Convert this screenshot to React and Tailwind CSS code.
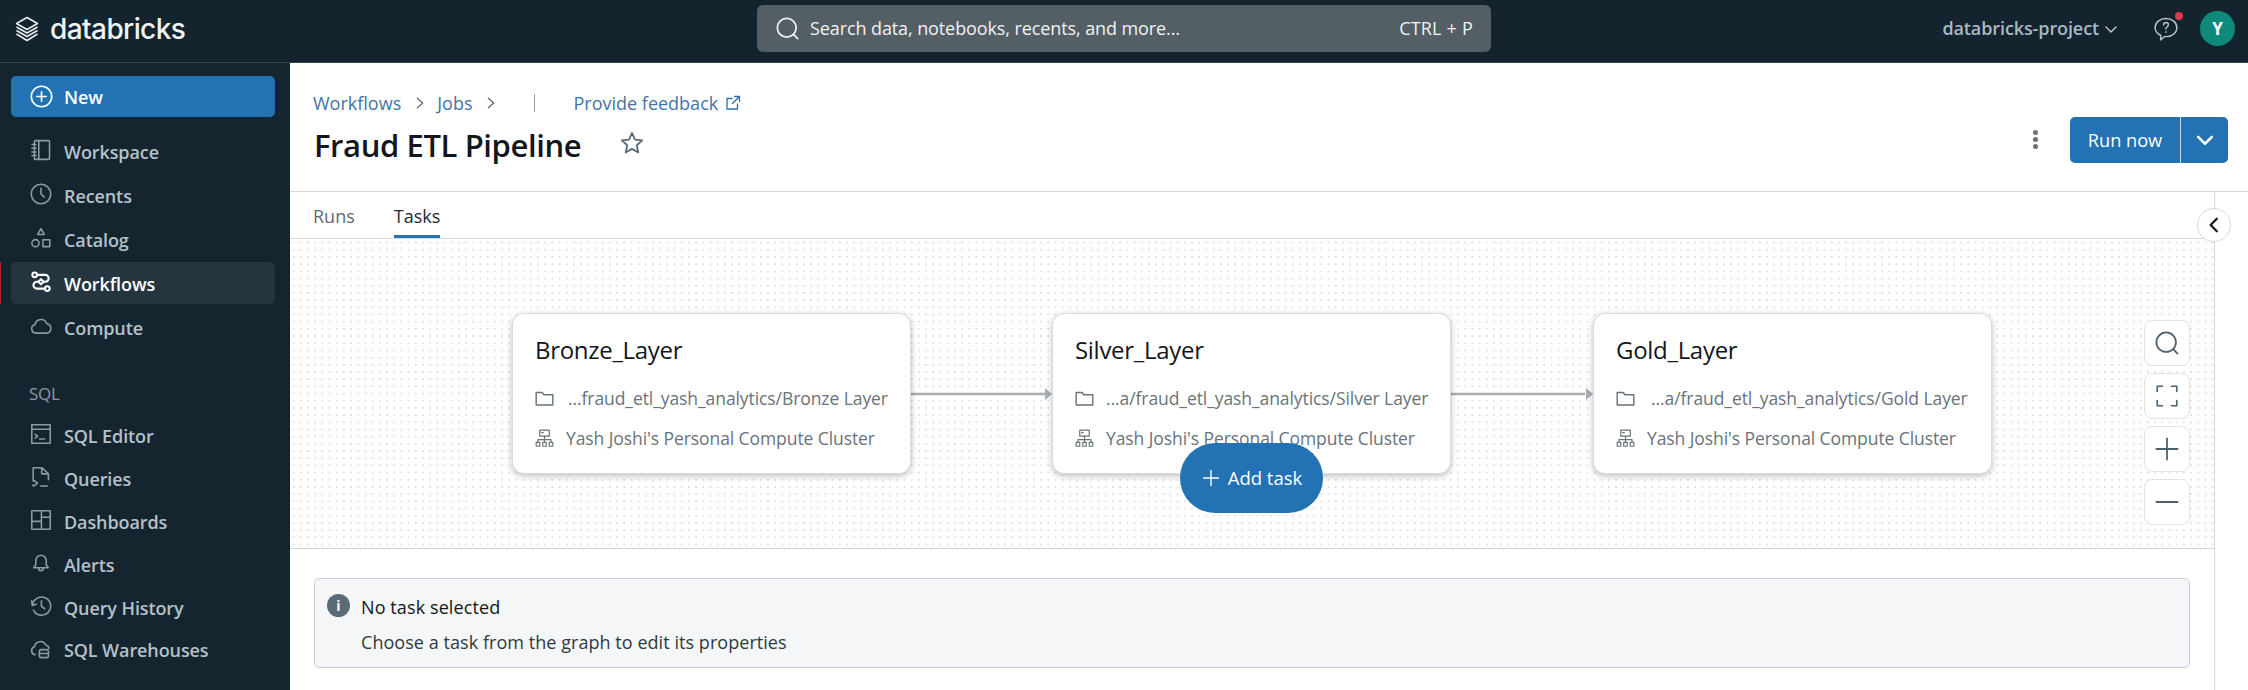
import React from "react";

const S = ({ children, size = 22, className = "", vb = 16, sw = 1 }) => (
  <svg width={size} height={size} viewBox={`0 0 ${vb} ${vb}`} fill="none" stroke="currentColor" strokeWidth={sw} strokeLinecap="round" strokeLinejoin="round" className={className}>{children}</svg>
);

const icons = {
  plus: <><circle cx="8" cy="8" r="7.1" /><path d="M8 4.7v6.6M4.7 8h6.6" /></>,
  workspace: <><rect x="3.2" y="1.2" width="11" height="13.6" rx=".6" /><path d="M6.4 1.2v13.6M1.4 4h3M1.4 6.7h3M1.4 9.4h3M1.4 12h3" /></>,
  clock: <><circle cx="8" cy="8" r="7.1" /><path d="M8 3.8V8l2.4 2.3" /></>,
  catalog: <><path d="M8 1.2l2.4 4.2H5.6z" /><circle cx="4" cy="11.8" r="2.6" /><rect x="9.4" y="9.3" width="5" height="5" /></>,
  workflows: <g strokeWidth="1.5"><circle cx="3.4" cy="2.8" r="1.7" /><path d="M5.1 2.8h6a2.5 2.5 0 0 1 0 5H5a2.5 2.5 0 0 0 0 5h6" /><circle cx="12.6" cy="12.8" r="1.7" /><path d="M8 5.9l1.9 1.9L8 9.7 6.1 7.800z" fill="#24353f" /></g>,
  cloud: <path d="M4.2 13.2a3.200 3.200 0 0 1-.5-6.300 4.400 4.400 0 0 1 8.500-.6 3.500 3.500 0 0 1 .1 6.900z" />,
  sqlEditor: <><rect x="1.300" y="1.300" width="13.400" height="13.400" /><path d="M1.300 4.600h13.400M3.800 8.200l1.700 1.400-1.700 1.400M7 11.600h3.600" /></>,
  queries: <path d="M2.300 11V1.300h6.400l4.700 4.400v4.300M8.500 1.500v4.200h4.800M2.300 14.600v-1M3 10.600l2.500 1.900L3 14.400M7.700 14.600h4.800" />,
  dashboards: <><rect x="1.300" y="1.300" width="13.400" height="13.400" /><path d="M1.300 9h7M8.300 1.300v13.400M8.300 6h6.400" /></>,
  bell: <path d="M2.700 11.500h10.600l-1.500-2.200V6.200a3.800 3.800 0 0 0-7.600 0v3.100zM6.200 11.800a1.800 1.800 0 0 0 3.600 0" />,
  history: <><path d="M1.300 4.200l.3 3.400 3-.9M1.900 7.200A6.600 6.600 0 1 1 2.500 11" /><path d="M8.300 4.200v4l2.400 1.800" /></>,
  warehouse: <><path d="M3.800 12.900a3 3 0 0 1-.6-5.800 4.400 4.400 0 0 1 8.300-1.300 3.500 3.500 0 0 1 2.400 2.300" /><rect x="6.800" y="9.200" width="6.600" height="5.800" rx="1.300" /><path d="M6.800 12h6.600" /></>,
};

const Item = ({ icon, label, active, h = "h-[42px] mb-[2px]" }) => (
  <div className={`relative flex items-center pl-[19px] ml-[11px] mr-[14px] rounded-[5px] ${h} ${active ? "bg-[#24353f] text-white font-semibold" : "text-[#b4c1c9] font-semibold"}`}>
    {active && <div className="absolute -left-[11px] top-0 bottom-0 w-px bg-[#b3262a]" />}
    <S sw={1.15} className={`shrink-0 -mt-[2px] ${active ? "text-white" : "text-[#8b9aa4]"}`}>{icons[icon]}</S>
    <span className="ml-[12px] pt-[3px] text-[18px] tracking-[-0.1px] whitespace-nowrap">{label}</span>
  </div>
);

const Folder = () => (
  <S size={19} sw={1.2} className="shrink-0 text-[#6a737a]"><path d="M1 3h5l1.500 1.800H15V13.500H1z" /></S>
);
const Net = () => (
  <S size={19} className="shrink-0 text-[#6a737a]"><rect x="4" y="1" width="8" height="5" /><path d="M5.500 3h1.500M8 6v3M2.500 11V9h11v2M8 9v2" /><rect x="1" y="11.200" width="3" height="3.300" /><rect x="6.500" y="11.200" width="3" height="3.300" /><rect x="12" y="11.200" width="3" height="3.300" /></S>
);

const Node = ({ pos, title, path, gap }) => (
  <div className={`absolute top-[74px] w-[399px] h-[161px] bg-white rounded-[12px] border border-[#d8dce0] shadow-[0_2px_6px_rgba(60,70,80,0.35)] pl-[22px] pt-[19px] ${pos}`}>
    <div className="text-[24px] leading-[34px] text-[#11171c] tracking-[-0.3px]">{title}</div>
    <div className="flex items-center h-[26px] mt-[18px] text-[#6a737a] text-[17.500px] tracking-[-0.08px] whitespace-nowrap">
      <Folder /><span className={gap}>{path}</span>
    </div>
    <div className="flex items-center h-[26px] mt-[14px] text-[#6a737a] text-[17.500px] tracking-[-0.08px] whitespace-nowrap">
      <Net /><span className="ml-[12px]">Yash Joshi's Personal Compute Cluster</span>
    </div>
  </div>
);

const ZoomBtn = ({ children }) => (
  <div className="w-[46px] h-[46px] bg-white border border-[#dfe3e7] rounded-[8px] flex items-center justify-center text-[#4d6070]">{children}</div>
);

export default function App() {
  return (
    <div className="w-[2248px] h-[690px] overflow-hidden flex flex-col bg-white font-['Open_Sans','Noto_Sans',sans-serif]">
      <header className="h-[63px] shrink-0 bg-[#14242f] border-b border-[#33434d] flex items-center relative pb-[5px]">
        <div className="w-[289px] flex items-center pl-[15px] text-white shrink-0">
          <svg width="24" height="26" viewBox="0 0 24 26" fill="none" stroke="#e8ecef" strokeWidth="1.500" strokeLinejoin="round">
            <path d="M12 1.500L22.500 7.500 12 13.500 1.500 7.500z" />
            <path d="M1.500 11l10.500 6 10.500-6M1.500 14.500l10.500 6 10.500-6M1.500 18l10.500 6.500L22.500 18" />
          </svg>
          <span className="ml-[11px] text-[28px] font-medium tracking-[-0.6px] font-['Inter',sans-serif] text-[#f2f4f5]">databricks</span>
        </div>
        <div className="ml-[468px] w-[734px] h-[47px] rounded-[6px] bg-[#545f65] flex items-center pl-[18px] pr-[18px] text-[#f0f2f3] text-[18px]">
          <S size={25} sw={1.100}><circle cx="7.500" cy="7.500" r="6" /><path d="M11.800 11.800l2.700 2.700" /></S>
          <span className="ml-[10px] tracking-[-0.1px]">Search data, notebooks, recents, and more...</span>
          <span className="ml-auto tracking-[0.2px]">CTRL + P</span>
        </div>
        <div className="ml-auto flex items-center pr-[13px]">
          <span className="text-[#a9b8c2] font-semibold text-[18px] tracking-[-0.1px]">databricks-project</span>
          <S size={16} className="ml-[4px] text-[#c3ced5]" sw={1.300}><path d="M3 6l5 5 5-5" /></S>
          <div className="relative ml-[34px] mr-[21px] text-[#b4c1c9]">
            <S size={26} sw={.9}><path d="M8 1.500c3.800 0 6.700 2.500 6.700 5.600s-2.900 5.600-6.300 5.600c-.4 0-.8 0-1.200-.1L4.700 14.700l.1-2.700c-2-1-3.500-2.800-3.500-4.900 0-3.100 2.900-5.600 6.700-5.600z" /><path d="M6.500 5.500c0-1 .7-1.500 1.500-1.500s1.500.6 1.500 1.400c0 1.300-1.500 1.200-1.500 2.600M8 9.700v.3" /></S>
            <div className="absolute -top-[4px] -right-[4px] w-[8px] h-[8px] rounded-full bg-[#e5354b]" />
          </div>
          <div className="w-[35px] h-[35px] rounded-full bg-[#0f8a7a] text-white font-bold text-[17px] flex items-center justify-center">Y</div>
        </div>
      </header>

      <div className="flex flex-1 min-h-0">
        <aside className="w-[290px] shrink-0 bg-[#15252f] border-r border-[#15252f] pt-[13px]">
          <div className="ml-[11px] mr-[14px] h-[41px] bg-[#2272b4] rounded-[5px] flex items-center pl-[19px] text-white font-semibold text-[18px] tracking-[-0.1px] mb-[13.200px]">
            <S size={23} sw={1.15}>{icons.plus}</S><span className="ml-[11px] pt-[2px]">New</span>
          </div>
          <Item icon="workspace" label="Workspace" />
          <Item icon="clock" label="Recents" />
          <Item icon="catalog" label="Catalog" />
          <Item icon="workflows" label="Workflows" active />
          <Item icon="cloud" label="Compute" />
          <div className="mt-[32px] pl-[29px] pt-[3px] h-[24px] flex items-center text-[#8b9aa4] text-[17px] tracking-[-0.3px] mb-[9.800px]">SQL</div>
          <Item icon="sqlEditor" label="SQL Editor" h="h-[42.800px]" />
          <Item icon="queries" label="Queries" h="h-[42.800px]" />
          <Item icon="dashboards" label="Dashboards" h="h-[42.800px]" />
          <Item icon="bell" label="Alerts" h="h-[42.800px]" />
          <Item icon="history" label="Query History" h="h-[42.800px]" />
          <Item icon="warehouse" label="SQL Warehouses" h="h-[42.800px]" />
        </aside>

        <main className="flex-1 min-w-0 flex flex-col">
          <div className="h-[129px] shrink-0 border-b border-[#d4d8dc] pl-[23px] pr-[20px] pt-[28px] flex justify-between">
            <div>
              <div className="flex items-center h-[26px] -translate-y-px text-[18px] text-[#3f74a8]">
                <span>Workflows</span>
                <S size={14} className="ml-[12px] mr-[10px] text-[#5f6a72]" sw={1.500}><path d="M5 2.500L11 8l-6 5.500" /></S>
                <span>Jobs</span>
                <S size={14} className="ml-[12px] mr-[10px] text-[#5f6a72]" sw={1.500}><path d="M5 2.500L11 8l-6 5.500" /></S>
                <span className="ml-[26px] w-px h-[18px] bg-[#9b9b9b]" />
                <span className="ml-[38px]">Provide feedback</span>
                <S size={16} className="ml-[7px] text-[#2272b4]" sw={1.300}><path d="M12.500 9v5H2V3.500h5M9.500 1.500h5v5M14.500 1.500L7.500 8.500" /></S>
              </div>
              <div className="flex items-center mt-[5px] h-[46px]">
                <span className="text-[31px] font-semibold text-[#11171c] tracking-[-0.4px] ml-[1px]">Fraud ETL Pipeline</span>
                <S size={24} className="ml-[39px] -mt-[4px] text-[#5a6b78]" sw={1.200}><path d="M8 1.300l2 4.500 4.800.5-3.600 3.200 1 4.800L8 11.900l-4.200 2.400 1-4.800L1.200 6.300 6 5.800z" /></S>
              </div>
            </div>
            <div className="flex items-start pt-[26px]">
              <div className="mt-[13px] mr-[32px] flex flex-col gap-[2px]">
                <div className="w-[5px] h-[5px] rounded-full bg-[#67727a]" /><div className="w-[5px] h-[5px] rounded-full bg-[#67727a]" /><div className="w-[5px] h-[5px] rounded-full bg-[#67727a]" />
              </div>
              <div className="w-[158px] h-[46px] rounded-[5px] bg-[#2272b4] flex text-white text-[18.200px]">
                <div className="w-[111px] pt-[1px] flex items-center justify-center border-r border-[#c4dcf0]">Run now</div>
                <div className="flex-1 flex items-center justify-center"><S size={20} sw={2}><path d="M2.500 5.500L8 11l5.500-5.500" /></S></div>
              </div>
            </div>
          </div>

          <div className="flex flex-1 min-h-0 relative">
            <div className="flex-1 min-w-0 flex flex-col border-r border-[#d4d8dc]">
              <div className="h-[47px] shrink-0 border-b border-[#d4d8dc] pl-[23px] flex items-end text-[18px] font-medium">
                <span className="text-[#5f6a72] h-[44px] pt-[4px] flex items-center border-b-[3px] border-transparent">Runs</span>
                <span className="ml-[39px] text-[#1d2a33] h-[44px] pt-[4px] flex items-center border-b-[3px] border-[#2272b4]">Tasks</span>
              </div>
              <div className="relative h-[310px] shrink-0 border-b border-[#d4d8dc] bg-[radial-gradient(#dde0e3_1px,transparent_1.200px)] bg-[size:7.200px_7.200px]">
                <svg className="absolute left-0 top-0" width="1924" height="309" fill="none">
                  <path d="M620 155h136M1160 155h135" stroke="#a8aeb3" strokeWidth="2.500" />
                  <path d="M755 149l7 6-7 6zM1296 149l7 6-7 6z" fill="#a8aeb3" />
                </svg>
                <Node pos="left-[222px]" title="Bronze_Layer" path="...fraud_etl_yash_analytics/Bronze Layer" gap="ml-[14px]" />
                <Node pos="left-[762px]" title="Silver_Layer" path="...a/fraud_etl_yash_analytics/Silver Layer" gap="ml-[12px]" />
                <Node pos="left-[1303px]" title="Gold_Layer" path="...a/fraud_etl_yash_analytics/Gold Layer" gap="ml-[16px]" />
                <div className="absolute left-[890px] top-[204px] w-[143px] h-[70px] rounded-full bg-[#2272b4] text-white text-[18.500px] flex items-center justify-center">
                  <S size={20} sw={1.100}><path d="M8 2v12M2 8h12" /></S><span className="ml-[7px]">Add task</span>
                </div>
                <div className="absolute left-[1854px] top-[81px] flex flex-col gap-[7px]">
                  <ZoomBtn><S size={26} sw={1.100}><circle cx="7.500" cy="7.500" r="6" /><path d="M11.800 11.800l2.700 2.700" /></S></ZoomBtn>
                  <ZoomBtn><S size={24} sw={1.100}><path d="M1.500 5V1.500H5M11 1.500h3.500V5M14.500 11v3.500H11M5 14.500H1.500V11" /></S></ZoomBtn>
                  <ZoomBtn><S size={26} sw={1.100}><path d="M8 1.500v13M1.500 8h13" /></S></ZoomBtn>
                  <ZoomBtn><S size={26} sw={1.100}><path d="M1.500 8h13" /></S></ZoomBtn>
                </div>
              </div>
              <div className="flex-1 min-h-0 pl-[24px] pr-[24px] pt-[29px]">
                <div className="h-[90px] rounded-[5px] border border-[#c3ccd6] bg-[#f4f6f8] pl-[12px] pt-[15px]">
                  <div className="flex items-center h-[26px]">
                    <div className="w-[23px] h-[23px] -mt-[3px] rounded-full bg-[#5a6b78] text-white text-[14px] font-bold flex items-center justify-center">i</div>
                    <span className="ml-[11px] text-[18px] font-medium text-[#11171c] tracking-[0.1px]">No task selected</span>
                  </div>
                  <div className="ml-[34px] mt-[9px] text-[18px] text-[#2e3a42] tracking-[0.05px]">Choose a task from the graph to edit its properties</div>
                </div>
              </div>
            </div>
            <div className="w-[33px] shrink-0" />
            <div className="absolute left-[1907px] top-[16px] w-[34px] h-[34px] rounded-full bg-white border border-[#d4d8dc] flex items-center justify-center text-[#11171c]">
              <S size={18} sw={2}><path d="M10.500 2.500L5 8l5.500 5.500" /></S>
            </div>
          </div>
        </main>
      </div>
    </div>
  );
}
